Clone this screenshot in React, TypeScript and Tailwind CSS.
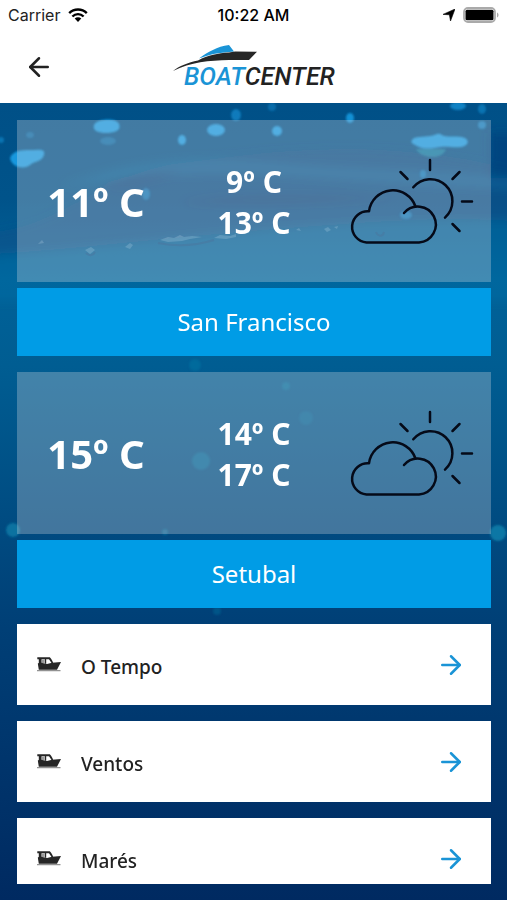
import { ArrowLeft, ArrowRight } from 'lucide-react'

interface Forecast {
  city: string
  current: number
  min: number
  max: number
}

const forecasts: Forecast[] = [
  { city: 'San Francisco', current: 11, min: 9, max: 13 },
  { city: 'Setubal', current: 15, min: 14, max: 17 },
]

const links = [
  { label: 'O Tempo', href: '#tempo' },
  { label: 'Ventos', href: '#ventos' },
  { label: 'Marés', href: '#mares' },
]

function StatusBar() {
  return (
    <div className="grid h-[30px] grid-cols-3 items-center px-2 font-['Inter',sans-serif] text-base text-[#222]">
      <div className="flex items-center gap-2">
        <span>Carrier</span>
        <svg className="h-[14px] w-5" viewBox="0 0 20 14" aria-hidden="true">
          <g fill="none" stroke="#000" strokeWidth="2.4">
            <path d="M1.2 5.2a12.4 12.4 0 0 1 17.6 0" />
            <path d="M4.4 8.5a7.9 7.9 0 0 1 11.2 0" />
          </g>
          <path d="M6.7 10.6a4.7 4.7 0 0 1 6.6 0L10 14z" />
        </svg>
      </div>
      <span className="text-center font-medium whitespace-nowrap text-black">10:22 AM</span>
      <div className="flex items-center justify-end gap-2">
        <svg className="size-3" viewBox="0 0 12 12" aria-hidden="true">
          <path d="M12 0 7.5 12 6.4 5.8 0 5.4z" stroke="#000" strokeWidth="0.6" />
        </svg>
        <svg className="h-4 w-9" viewBox="0 0 36 16" aria-hidden="true">
          <rect x="1" y="1" width="31" height="14" rx="4" fill="#fff" stroke="#aaa" strokeWidth="1.8" />
          <rect x="2.5" y="2.8" width="28" height="10.4" rx="1.5" />
          <path d="M34 5.5c2 .8 2 4.2 0 5z" fill="#aaa" />
        </svg>
      </div>
    </div>
  )
}

function Logo() {
  return (
    <svg className="h-[46px] w-[164px]" viewBox="0 0 164 46" role="img" aria-label="Boatcenter">
      <path d="M27 14.500C36 8 45 2.500 57 1l5 6.500-7 .8C46 9 37 10.500 27 14.500z" fill="#1a94d6" />
      <path d="M26 16.500C36 11 46 9.500 57 8.600L63 7.500l22 .2-8 8.300H57C37 16.500 19 18 1 27c6-5 15-8.500 25-10.500z" fill="#262626" />
      <text
        x="12"
        y="41"
        fontSize="25"
        fontWeight="500"
        fontStyle="italic"
        fontFamily="Roboto, sans-serif"
        fill="#1a94d6"
      >
        BOAT<tspan fill="#222">CENTER</tspan>
      </text>
    </svg>
  )
}

function WeatherIcon() {
  return (
    <svg
      className="h-[90px] w-[126px]"
      viewBox="0 0 126 90"
      fill="none"
      stroke="#050a18"
      strokeWidth="2.5"
      strokeLinecap="round"
      strokeLinejoin="round"
      role="img"
      aria-label="Parcialmente nublado"
    >
      <path d="M81 4v10M51.5 16l7 7M110.5 16l-7 7M113 45.5h10M103.5 68l7 7" />
      <path d="M64.3 31.3A22 22 0 1 1 96 61.600" />
      <path d="M66.500 50.500A24 24 0 0 0 20 55.300A15.600 15.600 0 0 0 17.500 86.500H70A18 18 0 1 0 55 57" />
    </svg>
  )
}

function BoatIcon() {
  return (
    <svg className="h-[15px] w-6 shrink-0" viewBox="0 0 24 15" fill="#262626" aria-hidden="true">
      <path d="M.3.3h12.500c1.600 1.500 2.800 3.700 3.500 6h-1.600L12 2.200H9.200v4.500H7.800V2.200H4.600v4.500H1.800V2.200H.3z" />
      <path d="M4.600 2.500h3v3.600h-3z" fill="#999" />
      <path d="M.8 6.500 3 5.500l7 1.500 5-1.200 9-.8-4 7.700H1.800z" />
      <path d="M0 13.200h23.500v1H0z" fill="#777" />
    </svg>
  )
}

function WaterBackdrop() {
  return (
    <svg
      className="absolute inset-0 h-full w-full"
      viewBox="0 0 507 797"
      preserveAspectRatio="xMidYMid slice"
      aria-hidden="true"
    >
      <defs>
        <linearGradient id="water" x1="0" y1="0" x2="0" y2="1">
          <stop offset="0" stopColor="#005087" />
          <stop offset="0.12" stopColor="#00538a" />
          <stop offset="0.22" stopColor="#006299" />
          <stop offset="0.33" stopColor="#005d92" />
          <stop offset="0.54" stopColor="#004a80" />
          <stop offset="0.66" stopColor="#003f76" />
          <stop offset="1" stopColor="#002a61" />
        </linearGradient>
        <filter id="soft" x="-20%" y="-20%" width="140%" height="140%">
          <feGaussianBlur stdDeviation="1.2" />
        </filter>
        <filter id="haze" x="-20%" y="-50%" width="140%" height="200%">
          <feGaussianBlur stdDeviation="5" />
        </filter>
      </defs>
      <rect width="507" height="797" fill="url(#water)" />
      <g filter="url(#haze)">
        <path d="M-20 130C60 128 100 70 180 60S380 30 527 70v50C400 105 200 140-20 155z" fill="#1a4a80" opacity="0.3" />
        <path d="M60 84c90-34 160-30 240-22 60 6 140 4 220 14v10c-100-4-180-10-240-14-80-4-140 0-220 12z" fill="#0a78ae" opacity="0.3" />
        <path d="M100 82c20-8 50-14 80-14l-30 10c-16 5-34 8-50 4z" fill="#123f78" opacity="0.5" />
        <path d="M180 100c60-12 150-8 220-6-60 6-150 10-220 6z" fill="#123f78" opacity="0.5" />
        <path d="M-20 152c170-10 340-40 547-34v80H-20z" fill="#0072a8" opacity="0.3" />
        <path d="M490 30h30v45h-30z" fill="#003a78" opacity="0.5" />
      </g>
      <g filter="url(#soft)" fill="#1ba5ee" opacity="0.85">
        <path d="M10 55c3-8 12-8 20-8s16-2 14 5-10 6-14 10-18 4-20-7z" />
        <path d="M94 22c2-6 22-8 25-1s-6 9-13 9-14-2-12-8z" />
        <path d="M412 37c2-4 12-3 18-4s8-4 12-1 18 0 23 3 3 8-4 9-14-1-20 0-16 3-22 0-9-4-7-7z" />
        <path d="M416 46h30c-2 6-8 8-14 8s-14-3-16-8z" fill="#1593b4" opacity="0.7" />
        <ellipse cx="216" cy="27" rx="9" ry="6" />
        <ellipse cx="182" cy="37" rx="4" ry="5" />
        <ellipse cx="277" cy="28" rx="5" ry="5" />
        <ellipse cx="236" cy="12" rx="5" ry="6" opacity="0.6" />
        <ellipse cx="350" cy="15" rx="4" ry="5" opacity="0.9" />
        <ellipse cx="458" cy="3" rx="8" ry="4" opacity="0.7" />
        <ellipse cx="482" cy="6" rx="4" ry="5" opacity="0.5" />
        <ellipse cx="482" cy="22" rx="4" ry="4" opacity="0.6" />
        <ellipse cx="272" cy="4" rx="4" ry="4" opacity="0.4" />
        <ellipse cx="146" cy="91" rx="4" ry="6" opacity="0.5" />
        <ellipse cx="108" cy="38" rx="8" ry="4" opacity="0.35" />
        <ellipse cx="30" cy="32" rx="4" ry="3" opacity="0.35" />
        <ellipse cx="423" cy="71" rx="3" ry="4" opacity="0.5" />
        <ellipse cx="406" cy="112" rx="6" ry="4" opacity="0.5" />
        <circle cx="1" cy="37" r="3" opacity="0.5" />
      </g>
      <g fill="#a4cfe8" opacity="0.25">
        <path d="M160 137l8-3 6 1 6-3 4 2 8-1 10 1-12 2-8 2-14 1zM214 135l6-3 10 1 6-2v3l-10 2z" />
        <path d="M85 147l6-3 4 3-5 4zM125 144l5-4 3 2-3 4zM38 141l4-4 2 3zM324 126l4-2 3 3-4 2zM334 124l4-1-1 3zM296 127l3-2 2 3z" />
      </g>
      <path d="M158 140c20 4 40 2 56-3M86 150c3 3 7 3 9-1M376 129c2 5 7 5 8 0" fill="none" stroke="#123f78" strokeWidth="2" opacity="0.35" />
      <g filter="url(#soft)" fill="#0d83ae">
        <circle cx="13" cy="427" r="7" opacity="0.7" />
        <circle cx="498" cy="430" r="8" opacity="0.8" />
        <circle cx="201" cy="358" r="9" opacity="0.4" />
        <circle cx="195" cy="262" r="6" opacity="0.35" />
        <circle cx="286" cy="283" r="4" opacity="0.4" />
        <circle cx="306" cy="315" r="7" opacity="0.25" />
        <circle cx="165" cy="429" r="3" opacity="0.5" />
        <circle cx="217" cy="508" r="4" opacity="0.3" />
      </g>
    </svg>
  )
}

function WeatherCard({ city, current, min, max }: Forecast) {
  return (
    <section className="flex shrink-0 flex-col gap-[6px] text-white">
      <div className="grid h-[162px] grid-cols-3 items-center justify-items-center bg-[#f4ecee]/27 font-bold">
        <p className="pt-[2px] text-[40px] leading-[54px]">{current}º C</p>
        <div className="pt-[2px] text-center text-[30px] leading-[41px]">
          <p>{min}º C</p>
          <p>{max}º C</p>
        </div>
        <WeatherIcon />
      </div>
      <h2 className="flex h-[68px] items-center justify-center bg-[#009ce6] text-2xl">{city}</h2>
    </section>
  )
}

export default function App() {
  return (
    <div className="flex h-screen flex-col overflow-hidden bg-white font-['Noto_Sans',sans-serif]">
      <StatusBar />
      <header className="grid h-[73px] shrink-0 grid-cols-[1fr_auto_1fr] items-center px-6">
        <button type="button" aria-label="Voltar" className="justify-self-start">
          <ArrowLeft className="size-[30px] text-[#222]" strokeWidth={2} />
        </button>
        <Logo />
      </header>
      <main className="relative flex min-h-0 flex-1 bg-[#004a7e] pt-[17px] pr-4 pb-4 pl-[17px]">
        <WaterBackdrop />
        <div className="relative flex flex-1 flex-col gap-4 overflow-hidden">
          {forecasts.map((f) => (
            <WeatherCard key={f.city} {...f} />
          ))}
          <nav className="flex shrink-0 flex-col gap-4">
            {links.map((l) => (
              <a key={l.href} href={l.href} className="flex h-[81px] items-center bg-white pr-[25px] pl-5 text-[#222]">
                <BoatIcon />
                <span className="flex-1 pt-[6px] pl-5 text-[19px] font-medium">{l.label}</span>
                <ArrowRight className="size-[30px] text-[#1a94d6]" strokeWidth={2} />
              </a>
            ))}
          </nav>
        </div>
      </main>
    </div>
  )
}
